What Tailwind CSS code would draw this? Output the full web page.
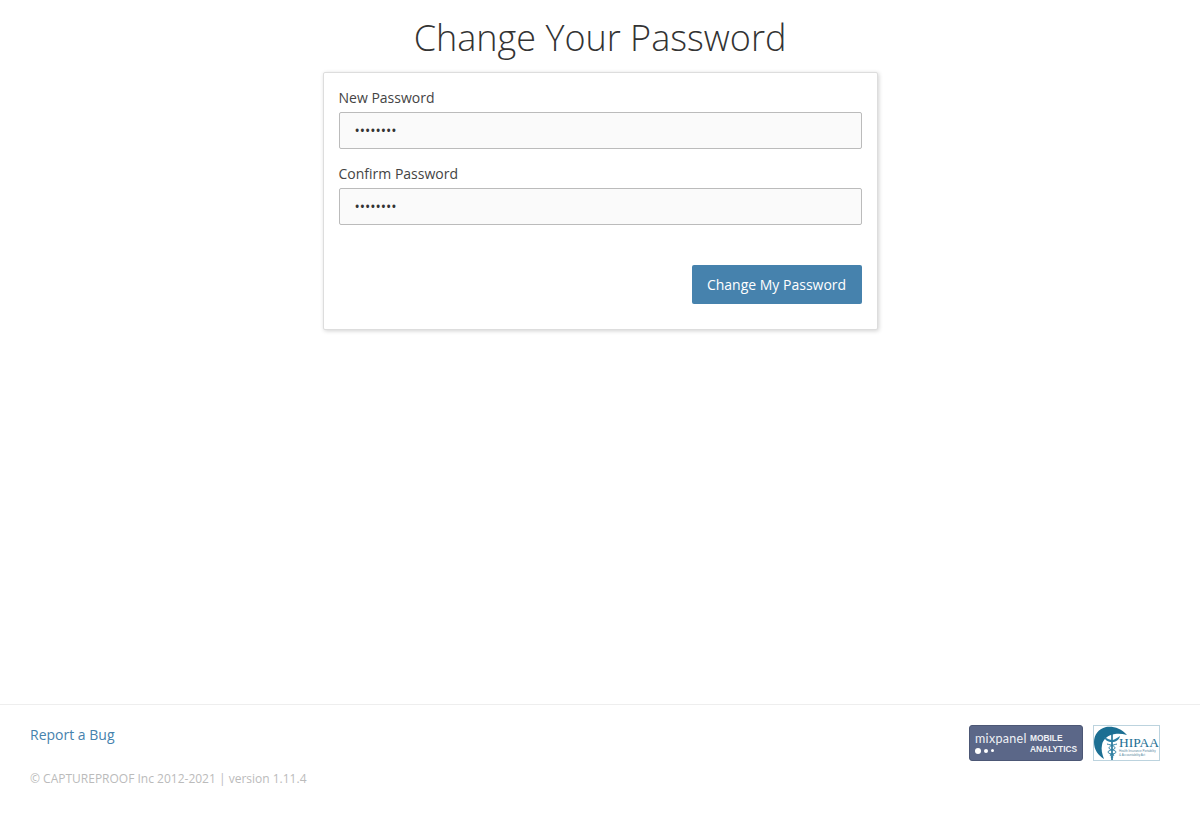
<!DOCTYPE html>
<html lang="en">
	<head>
		<meta charset="UTF-8" />
		<title>Change Your Password</title>
		<script src="https://cdn.jsdelivr.net/npm/@tailwindcss/browser@4"></script>
	</head>
	<body class="bg-white font-['Open_Sans',sans-serif] text-[14px] text-[#444] h-[815px] overflow-hidden flex flex-col">
		<!-- Main -->
		<main class="h-[704px] flex flex-col items-center">
			<h1 class="text-[36px] font-light leading-[40px] mt-[18px] mb-[14px] text-[#333]">Change Your Password</h1>

			<form class="w-[555px] h-[258px] bg-white border border-[#ddd] rounded-[2px] shadow-[1px_1px_4px_rgba(0,0,0,0.18)] px-[15px] pt-[15px]">
				<label class="block leading-[20px] mb-[4px]">New Password</label>
				<input type="password" value="12345678" class="block w-full h-[37px] bg-[#fafafa] border border-[#bbb] rounded-[2px] px-[15px] text-[#333] text-[14px] mb-[15px]" />

				<label class="block leading-[20px] mb-[4px]">Confirm Password</label>
				<input type="password" value="12345678" class="block w-full h-[37px] bg-[#fafafa] border border-[#bbb] rounded-[2px] px-[15px] text-[#333] text-[14px]" />

				<div class="flex justify-end mt-[40px]">
					<button type="button" class="w-[170px] h-[39px] bg-[#4682ad] text-white text-[14px] font-normal rounded-[2px]">Change My Password</button>
				</div>
			</form>
		</main>

		<!-- Footer -->
		<footer class="border-t border-[#eee] px-[30px] pt-[20px] flex justify-between items-start">
			<div>
				<a href="#" class="block text-[#4682ad] leading-[20px]">Report a Bug</a>
				<p class="text-[12px] text-[#bbb] leading-[18px] mt-[25px]">© CAPTUREPROOF Inc 2012-2021 | version 1.11.4</p>
			</div>
			<div class="flex gap-[10px] mr-[10px]">
				<!-- mixpanel badge -->
				<div class="w-[114px] h-[36px] bg-[#5b6788] rounded-[3px] border border-[#4c5775] flex items-center pl-[5px] text-white">
					<div class="w-[55px]">
						<div class="text-[12.5px] leading-[12px] font-['Lato',sans-serif] font-normal tracking-[0.3px] text-[#eef0f5]">mixpanel</div>
						<div class="flex items-center gap-[3px] mt-[3px]">
							<span class="w-[6px] h-[6px] rounded-full bg-white"></span>
							<span class="w-[4px] h-[4px] rounded-full bg-white"></span>
							<span class="w-[3px] h-[3px] rounded-full bg-white"></span>
						</div>
					</div>
					<div class="font-['Liberation_Sans',sans-serif] font-bold text-[8.4px] leading-[11px] mt-[1px] text-[#eef0f5]">
						<div>MOBILE</div>
						<div>ANALYTICS</div>
					</div>
				</div>
				<!-- HIPAA badge -->
				<div class="relative w-[67px] h-[36px] bg-white border border-[#bcd3de] overflow-hidden">
					<svg viewBox="0 0 65 34" class="absolute inset-0 w-[65px] h-[34px]">
						<path d="M33 9C27 2 19 0 12 1 4 3 0 9 0 16c0 8 4 13 10 17-2-5-3-10-2-14C9 13 14 9 21 8c4-.5 8 0 12 1z" fill="#1c6f93" />
						<path d="M18 5v29" stroke="#1c6f93" stroke-width="1.6" fill="none" />
						<path d="M10 11c4 2 6 3 8 3s5-2 8-4c-1 4-4 6-8 6s-7-2-8-5z" fill="#2c7fa3" />
						<path d="M13 18c4 1 8 2 8 4s-7 2-7 4 6 2 6 3-3 2-3 3M23 18c-4 1-8 2-8 4s7 2 7 4-6 2-6 3 3 2 3 3" stroke="#2c7fa3" stroke-width="1" fill="none" />
					</svg>
					<div class="absolute left-[25px] top-[10px] font-['Liberation_Serif',serif] text-[13.5px] leading-[13px] text-[#1c6f93]">HIPAA</div>
					<div class="absolute left-[25px] top-[23px] font-['Liberation_Sans',sans-serif] text-[3px] leading-[4px] text-[#5a8ba3] whitespace-nowrap">Health Insurance Portability<br />&amp; Accountability Act</div>
				</div>
			</div>
		</footer>
	</body>
</html>
